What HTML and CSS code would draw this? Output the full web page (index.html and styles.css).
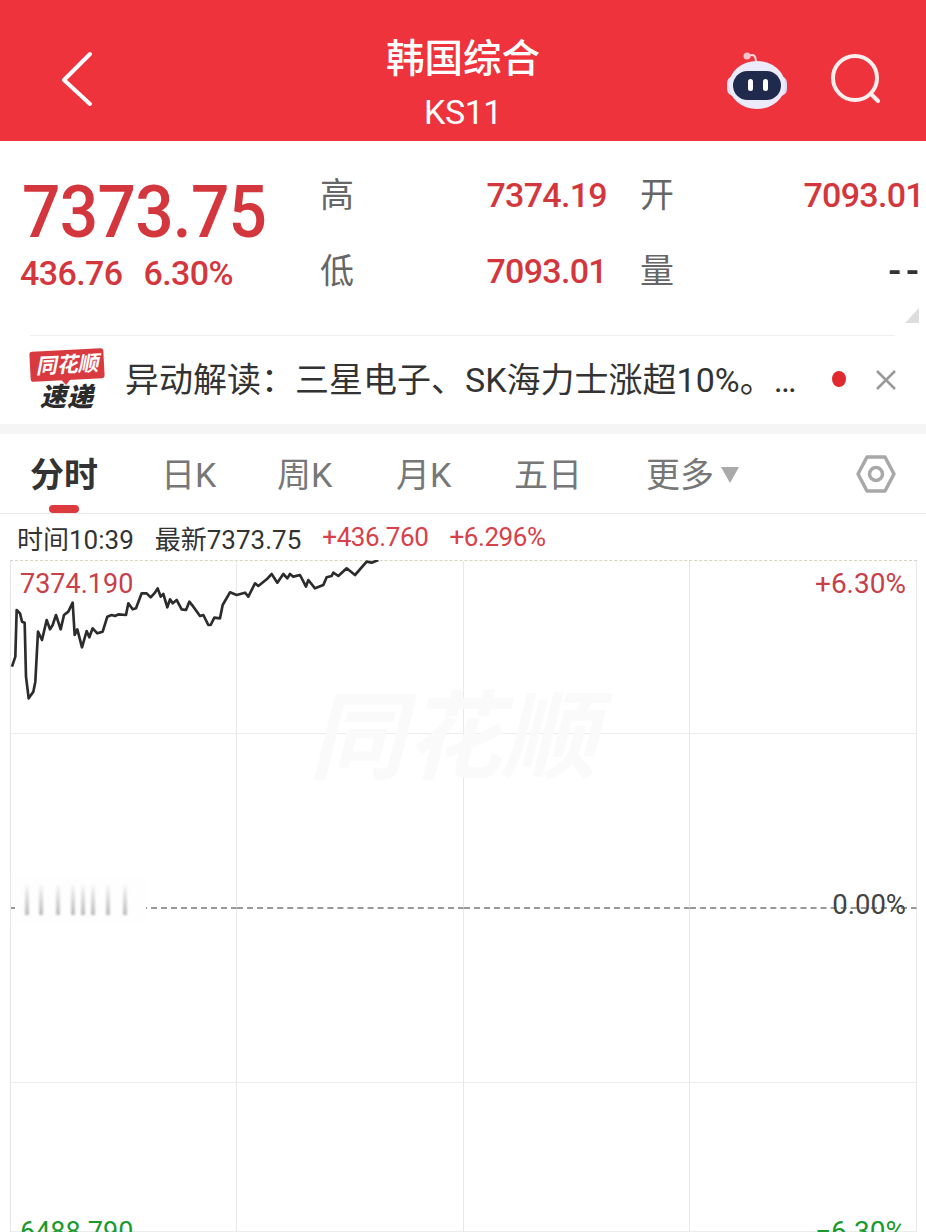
FILE: index.html
```html
<!DOCTYPE html>
<html lang="zh-CN">
<head>
    <meta charset="UTF-8">
    <meta name="viewport" content="width=device-width, initial-scale=1.0">
    <title>韩国综合</title>
    <link rel="stylesheet" href="styles.css">
</head>
<body>

    <!-- Top bar -->
    <header class="topbar">
        <svg class="back-icon" width="40" height="60" viewBox="0 0 40 60">
            <polyline points="31,4 5,30 31,54" fill="none" stroke="#fff" stroke-width="4" stroke-linecap="round" stroke-linejoin="round"/>
        </svg>
        <div class="title">
            <div class="title-name">韩国综合</div>
            <div class="title-code">KS11</div>
        </div>
        <div class="top-actions">
            <svg class="robot-icon" width="64" height="60" viewBox="0 0 64 60">
                <path d="M24 5 Q31 1 31 12" fill="none" stroke="#f8d5dc" stroke-width="2"/>
                <circle cx="22" cy="5" r="3.5" fill="#f9c4cc"/>
                <rect x="2" y="25" width="60" height="20" rx="7" fill="#dcdcf5"/>
                <ellipse cx="32" cy="34" rx="28" ry="24" fill="#ecebfb"/>
                <rect x="8" y="20" width="48" height="29" rx="14.5" fill="#1f2a4c"/>
                <rect x="23" y="28" width="5" height="12" rx="2.5" fill="#fff"/>
                <rect x="38" y="28" width="5" height="12" rx="2.5" fill="#fff"/>
            </svg>
            <svg class="search-icon" width="56" height="56" viewBox="0 0 56 56">
                <circle cx="25" cy="25" r="22" fill="none" stroke="#fdeeee" stroke-width="4"/>
                <line x1="41" y1="41" x2="48" y2="48" stroke="#fdeeee" stroke-width="4" stroke-linecap="round"/>
            </svg>
        </div>
    </header>

    <!-- Quote summary -->
    <section class="quote">
        <div class="quote-main">
            <div class="price">7373.75</div>
            <div class="change"><span>436.76</span><span>6.30%</span></div>
        </div>
        <div class="quote-grid">
            <span class="q-label">高</span><span class="q-value">7374.19</span>
            <span class="q-label q-second">开</span><span class="q-value">7093.01</span>
            <span class="q-label">低</span><span class="q-value">7093.01</span>
            <span class="q-label q-second">量</span><span class="q-value q-empty">--</span>
        </div>
        <div class="corner"></div>
    </section>

    <!-- News strip -->
    <section class="news">
        <div class="logo">
            <div class="logo-top">同花顺</div>
            <div class="logo-bottom">速递</div>
        </div>
        <div class="news-text">异动解读&#xFF1A;三星电子、SK海力士涨超10%。…</div>
        <span class="news-dot"></span>
        <svg class="news-close" width="22" height="22" viewBox="0 0 22 22">
            <path d="M2 2 L20 20 M20 2 L2 20" stroke="#999" stroke-width="2.5"/>
        </svg>
    </section>

    <!-- Period tabs -->
    <nav class="tabs">
        <span class="tab tab-active">分时</span>
        <span class="tab tab-day">日K</span>
        <span class="tab tab-week">周K</span>
        <span class="tab tab-month">月K</span>
        <span class="tab tab-five">五日</span>
        <span class="tab tab-more">更多<i class="caret"></i></span>
        <svg class="settings-icon" width="40" height="40" viewBox="0 0 40 40">
            <polygon points="11,3 29,3 38,20 29,37 11,37 2,20" fill="none" stroke="#a8a8a8" stroke-width="3.5" stroke-linejoin="round"/>
            <circle cx="20" cy="20" r="6.5" fill="none" stroke="#a8a8a8" stroke-width="3.5"/>
        </svg>
    </nav>

    <!-- Crosshair info -->
    <div class="info">
        <span class="info-time">时间10:39</span>
        <span class="info-new">最新7373.75</span>
        <span class="info-up">+436.760</span>
        <span class="info-up">+6.296%</span>
    </div>

    <!-- Chart -->
    <section class="chart">
        <div class="grid">
            <div class="cell"></div><div class="cell"></div><div class="cell"></div><div class="cell"></div>
            <div class="cell mid"></div><div class="cell mid"></div><div class="cell mid"></div><div class="cell mid"></div>
            <div class="cell"></div><div class="cell"></div><div class="cell"></div><div class="cell"></div>
            <div class="cell"></div><div class="cell"></div><div class="cell"></div><div class="cell"></div>
        </div>

        <div class="watermark">同花顺</div>

        <div class="blur-patch">
            <i style="left:10px"></i><i style="left:24px"></i><i style="left:41px"></i><i style="left:56px"></i>
            <i style="left:66px"></i><i style="left:76px"></i><i style="left:91px"></i><i style="left:108px"></i>
        </div>

        <svg class="price-line" width="400" height="170" viewBox="0 0 1200 510">
            <polyline fill="none" stroke="#2c2c2c" stroke-width="8" stroke-linejoin="round" points="36,350 46,320 50,180 60,190 66,215 74,218 78,380 86,445 100,425 106,395 114,245 126,270 140,210 150,238 158,225 168,195 182,238 192,195 205,185 218,158 224,255 232,238 246,292 260,243 268,262 278,235 292,250 308,245 322,200 335,195 345,198 355,193 378,195 385,160 398,178 408,175 425,130 440,130 452,142 465,128 473,115 482,140 490,132 502,172 510,148 518,160 530,150 545,178 558,180 568,155 580,170 600,198 610,195 625,225 632,225 643,203 660,205 668,165 690,127 710,135 735,128 745,140 765,100 775,108 800,88 815,72 832,98 850,72 862,85 870,72 880,80 900,75 918,110 925,90 945,115 970,105 980,82 995,78 1000,68 1015,78 1040,55 1065,75 1100,35 1115,38 1135,30"/>
        </svg>

        <span class="axis axis-high">7374.190</span>
        <span class="axis axis-up">+6.30%</span>
        <span class="axis axis-zero">0.00%</span>
        <span class="axis axis-low">6488.790</span>
        <span class="axis axis-down">−6.30%</span>
    </section>

</body>
</html>
```

FILE: styles.css
```css
/* General Styles */
* {
    box-sizing: border-box;
}

html, body {
    margin: 0;
    padding: 0;
}

body {
    width: 926px;
    height: 1232px;
    overflow: hidden;
    background: #fff;
    color: #333;
    font-family: Roboto, "Noto Sans CJK SC", sans-serif;
}

/* Top bar */
.topbar {
    height: 141px;
    background: #ef333d;
    color: #fff;
    display: grid;
    grid-template-columns: 1fr auto 1fr;
    align-items: start;
    padding: 0 40px;
}

.title {
    text-align: center;
    padding-top: 34px;
}

.title-name {
    font-size: 38.5px;
    line-height: 50px;
    font-weight: 500;
}

.title-code {
    font-size: 34px;
    line-height: 40px;
    letter-spacing: -0.5px;
    margin-top: 8px;
}

.top-actions {
    display: flex;
    justify-content: flex-end;
    align-items: center;
    gap: 41px;
    padding-top: 51px;
}

.back-icon {
    margin: 50px 0 0 19px;
}

/* Quote summary */
.quote {
    height: 194px;
    position: relative;
    display: flex;
    padding: 30px 0 0 22px;
    color: #d4363d;
}

.quote-main {
    width: 298px;
}

.price {
    font-size: 72px;
    line-height: 80px;
    font-weight: 500;
    letter-spacing: -0.8px;
    transform: translateY(2px) scaleX(0.94);
    transform-origin: left center;
}

.change {
    display: flex;
    gap: 21px;
    font-size: 34px;
    line-height: 44px;
    font-weight: 500;
    letter-spacing: -0.6px;
    margin-left: -2px;
}

.quote-grid {
    display: grid;
    grid-template-columns: 32px 255px 65px 252px;
    grid-auto-rows: 76px;
    align-self: flex-start;
    align-items: center;
    margin-top: -14px;
}

.q-label {
    color: #666;
    font-size: 34px;
    line-height: 76px;
}

.q-second {
    padding-left: 33px;
    white-space: nowrap;
}

.q-value {
    text-align: right;
    font-size: 34px;
    line-height: 76px;
    font-weight: 500;
    letter-spacing: -0.7px;
    white-space: nowrap;
}

.q-empty {
    color: #333;
    font-size: 38px;
    letter-spacing: 5px;
}

.corner {
    position: absolute;
    right: 7px;
    bottom: 12px;
    width: 0;
    height: 0;
    border-left: 14px solid transparent;
    border-bottom: 15px solid #ddd;
}

/* News strip */
.news {
    height: 99px;
    border-bottom: 10px solid #f5f5f5;
    display: flex;
    align-items: center;
    padding: 0 0 0 30px;
    position: relative;
}

.news::before {
    content: "";
    position: absolute;
    top: 0;
    left: 30px;
    right: 31px;
    border-top: 1px solid #eee;
}

.logo {
    width: 74px;
    text-align: center;
    margin-top: 2px;
}

.logo-top {
    background: #d93a3f;
    color: #fff;
    font-size: 21px;
    line-height: 30px;
    font-weight: 700;
    font-style: italic;
    border-radius: 3px;
    transform: rotate(-3deg);
    position: relative;
}

.logo-top::after {
    content: "";
    position: absolute;
    left: 30px;
    bottom: -5px;
    border-left: 5px solid transparent;
    border-right: 5px solid transparent;
    border-top: 6px solid #d93a3f;
}

.logo-bottom {
    color: #2b2b2b;
    font-size: 26px;
    line-height: 30px;
    font-weight: 900;
    font-style: italic;
    margin-top: 2px;
    letter-spacing: 1px;
}

.news-text {
    margin-left: 21px;
    width: 707px;
    font-size: 34px;
    line-height: 44px;
    color: #333;
    white-space: nowrap;
}

.news-dot {
    width: 14px;
    height: 16px;
    border-radius: 50%;
    background: #e0282f;
    margin-top: -2px;
}

.news-close {
    margin-left: 29px;
}

/* Period tabs */
.tabs {
    height: 80px;
    position: relative;
    border-bottom: 1px solid #e8e8e8;
    color: #777;
    font-size: 34px;
}

.tab {
    position: absolute;
    top: 18px;
    line-height: 46px;
}

.tab-active {
    left: 30px;
    color: #333;
    font-weight: 700;
}

.tab-active::after {
    content: "";
    position: absolute;
    left: 19px;
    top: 53px;
    width: 30px;
    height: 8px;
    border-radius: 4px;
    background: #dc3a3f;
}

.tab-day { left: 161px; }
.tab-week { left: 277px; }
.tab-month { left: 396px; }
.tab-five { left: 514px; }
.tab-more { left: 646px; }

.caret {
    display: inline-block;
    margin-left: 7px;
    vertical-align: 4px;
    border-left: 9px solid transparent;
    border-right: 9px solid transparent;
    border-top: 16px solid #aaa;
}

.settings-icon {
    position: absolute;
    left: 856px;
    top: 20px;
}

/* Crosshair info */
.info {
    height: 46px;
    display: flex;
    align-items: center;
    padding-left: 17px;
    gap: 21px;
    font-size: 26px;
    color: #333;
}

.info-up {
    color: #d8404a;
    letter-spacing: -0.4px;
}

/* Chart */
.chart {
    height: 672px;
    position: relative;
    overflow: hidden;
}

.grid {
    margin-left: 10px;
    width: 907px;
    height: 100%;
    display: grid;
    grid-template-columns: 226px 227px 226px 227px;
    grid-template-rows: 173px 175px 174px 1fr;
    border-left: 1px solid #e6e6e6;
    border-top: 1px dashed #d9d3c4;
}

.cell {
    border-right: 1px solid #e8e8e8;
    border-bottom: 1px solid #ececec;
}

.cell.mid {
    border-bottom: 2px dashed #999;
}

.watermark {
    position: absolute;
    left: 309px;
    top: 123px;
    font-size: 96px;
    line-height: 110px;
    font-weight: 700;
    font-style: italic;
    color: #fafafa;
    white-space: nowrap;
}

.blur-patch {
    position: absolute;
    left: 15px;
    top: 318px;
    width: 131px;
    height: 44px;
    background: #fefefe;
}

.blur-patch i {
    position: absolute;
    top: 7px;
    width: 4px;
    height: 30px;
    background: linear-gradient(to bottom, #f8f8f8, #bbb);
    filter: blur(1px);
}

.price-line {
    position: absolute;
    left: 0;
    top: -10px;
}

.axis {
    position: absolute;
    font-size: 27px;
    line-height: 32px;
    white-space: nowrap;
}

.axis-high { left: 20px; top: 8px; color: #c8404a; }
.axis-up { right: 20px; top: 8px; color: #c8404a; font-size: 28px; }
.axis-zero { right: 20px; top: 329px; color: #444; font-size: 27.5px; }
.axis-low { left: 20px; top: 656px; color: #1a9a2c; }
.axis-down { right: 20px; top: 656px; color: #1a9a2c; font-size: 28px; }
```
